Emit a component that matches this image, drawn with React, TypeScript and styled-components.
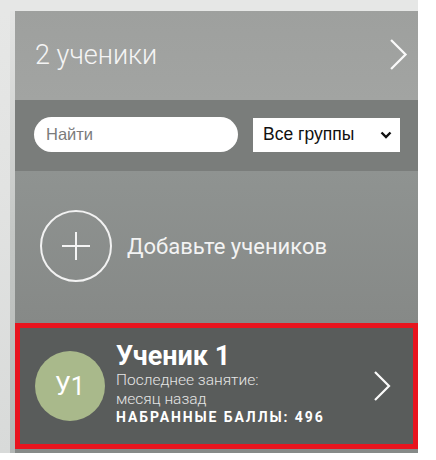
import React from "react";
import styled, { createGlobalStyle } from "styled-components";

const Global = createGlobalStyle`
  html, body { margin: 0; padding: 0; background: #ffffff; }
  body { font-family: Roboto, "Noto Sans", sans-serif; }
  * { box-sizing: border-box; }
`;

const Page = styled.div`
  width: 436px;
  height: 460px;
  display: flex;
  flex-direction: column;
`;

const TopStrip = styled.div`
  width: 418px;
  height: 11px;
  background: #e6e7e6;
  flex-shrink: 0;
`;

const Body = styled.div`
  display: flex;
  width: 418px;
`;

const Gutter = styled.div`
  width: 10px;
  background: linear-gradient(#e6e7e6, #e2e3e2 40%, #d8dad9);
`;

const Edge = styled.div`
  width: 5px;
  background: linear-gradient(#e3e4e3, #c4c7c5 50%, #b3b7b5);
`;

const Panel = styled.div`
  width: 403px;
  display: flex;
  flex-direction: column;
  padding-bottom: 4px;
  background: #868a88;
`;

const Header = styled.div`
  height: 89px;
  display: flex;
  align-items: center;
  justify-content: space-between;
  padding: 0 10px 2px 20px;
  background: linear-gradient(#9ea09e, #a2a4a2);
`;

const Title = styled.span`
  font-family: Roboto, sans-serif;
  font-weight: 300;
  font-size: 27px;
  color: #f4f4f4;
`;

const Filters = styled.div`
  height: 71px;
  display: flex;
  align-items: center;
  gap: 15px;
  padding: 0 18px 2px 19px;
  background: #7a7d7b;
`;

const Search = styled.input`
  width: 204px;
  height: 35px;
  border: none;
  border-radius: 18px;
  padding: 0 12px;
  font-family: "Liberation Sans", Arial, sans-serif;
  font-size: 16.5px;
  color: #333;
  background: #fff;
  outline: none;
  &::placeholder { color: #7b7b7b; }
`;

const Select = styled.div`
  width: 147px;
  height: 34px;
  background: #fff;
  display: flex;
  align-items: center;
  justify-content: space-between;
  padding: 0 8px 0 10px;
  font-family: "Liberation Sans", Arial, sans-serif;
  font-size: 17.5px;
  color: #111;
`;

const AddRow = styled.div`
  height: 152px;
  display: flex;
  align-items: center;
  gap: 15px;
  padding: 0 0 2px 25px;
  background: linear-gradient(#8f9391, #868987);
`;

const PlusCircle = styled.div`
  width: 72px;
  height: 72px;
  border-radius: 50%;
  border: 2px solid #f2f2f2;
  display: flex;
  align-items: center;
  justify-content: center;
`;

const AddText = styled.span`
  font-family: Roboto, sans-serif;
  font-size: 22px;
  color: #f3f3f3;
`;

const Card = styled.div`
  height: 126px;
  border: 5px solid #e8141e;
  background: #595c5b;
  display: flex;
  align-items: center;
  padding: 0 22px 0 15px;
`;

const Avatar = styled.div`
  width: 70px;
  height: 70px;
  border-radius: 50%;
  background: #a9b98b;
  display: flex;
  align-items: center;
  justify-content: center;
  font-family: Roboto, sans-serif;
  font-size: 25px;
  color: #fff;
  flex-shrink: 0;
`;

const Info = styled.div`
  flex: 1;
  display: flex;
  flex-direction: column;
  padding-left: 11px;
  margin-top: -4px;
`;

const Name = styled.div`
  font-family: Roboto, sans-serif;
  font-weight: 700;
  font-size: 27px;
  line-height: 29px;
  color: #fff;
`;

const Meta = styled.div`
  font-family: Roboto, sans-serif;
  font-weight: 300;
  font-size: 15.5px;
  line-height: 18.5px;
  color: #e6e6e6;
`;

const Score = styled.div`
  font-family: Roboto, sans-serif;
  font-weight: 700;
  font-size: 14px;
  letter-spacing: 1.9px;
  line-height: 17px;
  margin-top: 1px;
  color: #fff;
`;

const Chevron = ({ h = 30 }: { h?: number }) => (
  <svg width={h * 0.6} height={h} viewBox="0 0 18 30" fill="none">
    <path d="M2 1 L16 15 L2 29" stroke="#fafafa" strokeWidth="2.2" />
  </svg>
);

export default function App() {
  return (
    <>
      <Global />
      <Page>
        <TopStrip />
        <Body>
          <Gutter />
          <Edge />
          <Panel>
            <Header>
              <Title>2 ученики</Title>
              <Chevron h={31} />
            </Header>
            <Filters>
              <Search placeholder="Найти" />
              <Select>
                <span>Все группы</span>
                <svg width="12" height="8" viewBox="0 0 12 8">
                  <path d="M1.5 1.5 L6 6 L10.5 1.5" stroke="#111" strokeWidth="2.4" fill="none" />
                </svg>
              </Select>
            </Filters>
            <AddRow>
              <PlusCircle>
                <svg width="32" height="32" viewBox="0 0 32 32">
                  <path d="M16 2 V30 M2 16 H30" stroke="#f4f4f4" strokeWidth="2" />
                </svg>
              </PlusCircle>
              <AddText>Добавьте учеников</AddText>
            </AddRow>
            <Card>
              <Avatar>У1</Avatar>
              <Info>
                <Name>Ученик 1</Name>
                <Meta>Последнее занятие:</Meta>
                <Meta>месяц назад</Meta>
                <Score>НАБРАННЫЕ БАЛЛЫ: 496</Score>
              </Info>
              <Chevron h={30} />
            </Card>
          </Panel>
        </Body>
      </Page>
    </>
  );
}
